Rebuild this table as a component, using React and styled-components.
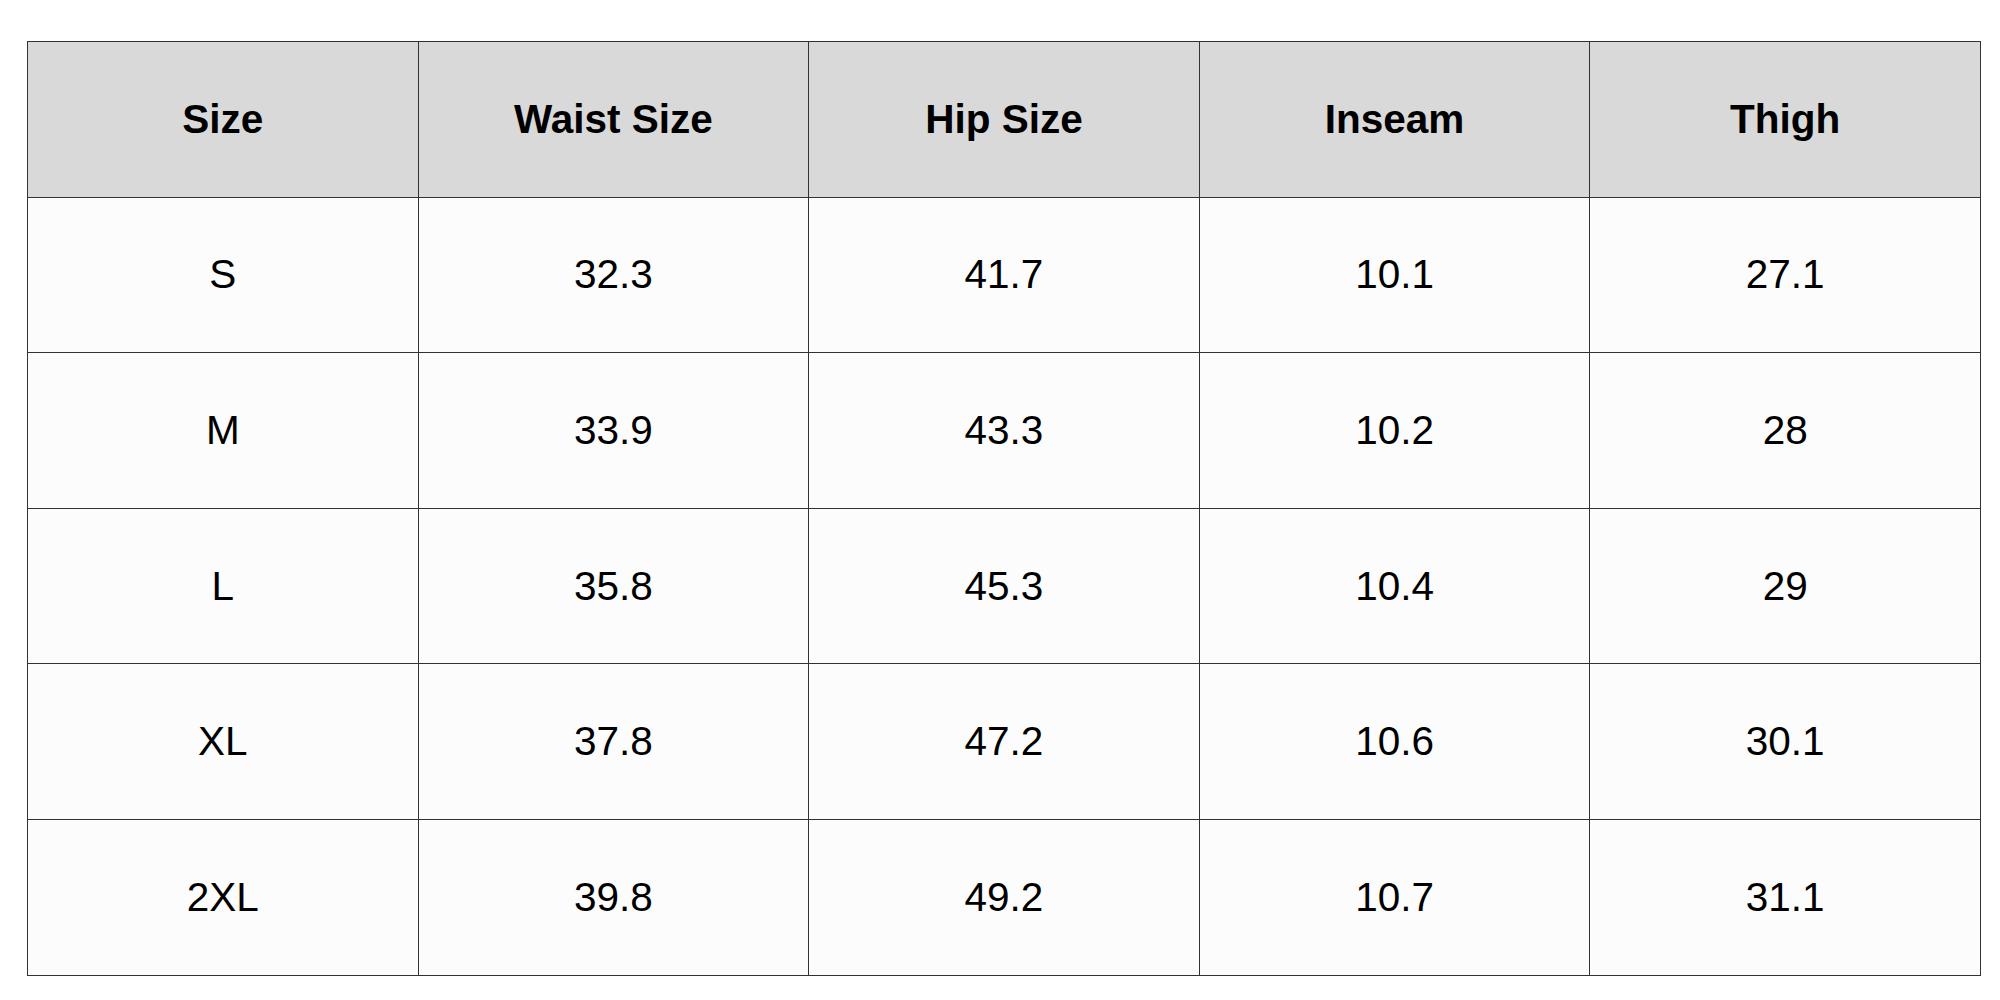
import React from "react";
import styled, { createGlobalStyle } from "styled-components";

const GlobalStyle = createGlobalStyle`
  html, body {
    margin: 0;
    padding: 0;
    background: #ffffff;
    font-family: "Liberation Sans", Arial, sans-serif;
  }
`;

const Page = styled.div`
  padding: 41px 20px 0 27px;
`;

const Table = styled.table`
  width: 1954px;
  border-collapse: collapse;
  table-layout: fixed;
  color: #000;
`;

const HeadCell = styled.th`
  height: 154.6px;
  background: #d9d9d9;
  border: 1px solid #333;
  font-size: 40.5px;
  font-weight: 700;
  text-align: center;
  vertical-align: middle;
  padding: 0;
`;

const Cell = styled.td`
  height: 154.6px;
  background: #fcfcfc;
  border: 1px solid #333;
  font-size: 40.5px;
  font-weight: 400;
  text-align: center;
  vertical-align: middle;
  padding: 0;
`;

const columns = ["Size", "Waist Size", "Hip Size", "Inseam", "Thigh"];

const rows = [
  ["S", "32.3", "41.7", "10.1", "27.1"],
  ["M", "33.9", "43.3", "10.2", "28"],
  ["L", "35.8", "45.3", "10.4", "29"],
  ["XL", "37.8", "47.2", "10.6", "30.1"],
  ["2XL", "39.8", "49.2", "10.7", "31.1"],
];

export default function App() {
  return (
    <>
      <GlobalStyle />
      <Page>
        <Table>
          <thead>
            <tr>
              {columns.map((c) => (
                <HeadCell key={c}>{c}</HeadCell>
              ))}
            </tr>
          </thead>
          <tbody>
            {rows.map((r) => (
              <tr key={r[0]}>
                {r.map((v, i) => (
                  <Cell key={i}>{v}</Cell>
                ))}
              </tr>
            ))}
          </tbody>
        </Table>
      </Page>
    </>
  );
}
